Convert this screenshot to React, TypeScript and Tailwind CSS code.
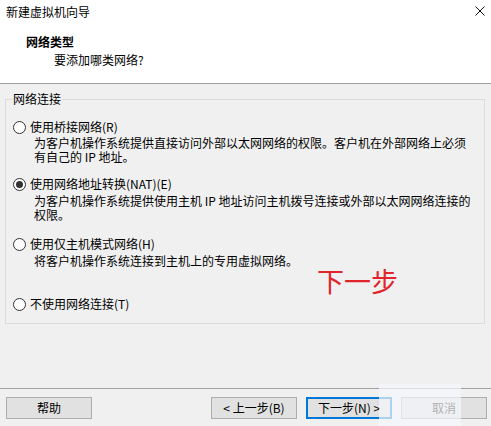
import React from "react";

function Radio({ checked }: { checked?: boolean }) {
  return (
    <span className="w-[13px] h-[13px] shrink-0 rounded-full border border-[#333333] bg-white flex items-center justify-center">
      {checked && <span className="w-[7px] h-[7px] rounded-full bg-[#333333]" />}
    </span>
  );
}

function Option({ label, checked, className }: { label: string; checked?: boolean; className?: string }) {
  return (
    <div className={"flex items-center gap-[4px] pl-[7px] h-[16px] " + (className ?? "")}>
      <Radio checked={checked} />
      <span className="leading-[16px] whitespace-nowrap">{label}</span>
    </div>
  );
}

function Btn({ children, primary }: { children: React.ReactNode; primary?: boolean }) {
  return (
    <div
      className={
        "w-[86px] h-[22px] flex items-center justify-center bg-[#e1e1e1] " +
        (primary ? "border-2 border-[#0078d7]" : "border border-[#adadad]")
      }
    >
      {children}
    </div>
  );
}

export default function App() {
  return (
    <div className="relative w-[491px] h-[426px] bg-[#f0f0f0] flex flex-col text-[12px] leading-[14px] text-[#000000] font-['Noto_Sans_CJK_SC','Microsoft_YaHei',sans-serif] overflow-hidden">
      <div className="bg-white h-[84px] border-b border-[#a0a0a0] flex flex-col shrink-0">
        <div className="h-[24px] flex items-center justify-between pl-[6px] pr-[6px]">
          <span className="leading-[16px]">新建虚拟机向导</span>
          <svg width="10" height="10" viewBox="0 0 10 10" className="mb-[2px]">
            <path d="M0.5 0.5 L9.5 9.5 M9.5 0.5 L0.5 9.5" stroke="#111" strokeWidth="1" fill="none" />
          </svg>
        </div>
        <div className="mt-[10px] pl-[26px] font-bold leading-[16px]">网络类型</div>
        <div className="mt-[3px] pl-[54px] leading-[14px]">要添加哪类网络?</div>
      </div>

      <div className="relative mt-[15px] ml-[5px] mr-[6px] border border-[#dcdcdc] pt-[19px] pb-[11px] shrink-0">
        <span className="absolute -top-[8px] left-[6px] px-[1px] bg-[#f0f0f0] leading-[14px]">网络连接</span>
        <Option label="使用桥接网络(R)" />
        <div className="mt-[1px] pl-[28px] leading-[14px] whitespace-nowrap">
          为客户机操作系统提供直接访问外部以太网网络的权限。客户机在外部网络上必须
          <br />
          有自己的 IP 地址。
        </div>
        <Option label="使用网络地址转换(NAT)(E)" checked className="mt-[12px]" />
        <div className="mt-[2px] pl-[28px] leading-[14px] whitespace-nowrap">
          为客户机操作系统提供使用主机 IP 地址访问主机拨号连接或外部以太网网络连接的
          <br />
          权限。
        </div>
        <Option label="使用仅主机模式网络(H)" className="mt-[14px]" />
        <div className="mt-[2px] pl-[28px] leading-[14px] whitespace-nowrap">
          将客户机操作系统连接到主机上的专用虚拟网络。
        </div>
        <Option label="不使用网络连接(T)" className="mt-[28px]" />
      </div>

      <div className="flex-1" />

      <div className="border-t border-[#a0a0a0] pt-[8px] pb-[7px] pl-[6px] pr-[4px] flex items-center shrink-0">
        <Btn>帮助</Btn>
        <div className="flex-1" />
        <div className="flex gap-[9px]">
          <Btn>&lt; 上一步(B)</Btn>
          <Btn primary>下一步(N) &gt;</Btn>
          <Btn>取消</Btn>
        </div>
      </div>

      <div className="absolute left-[317px] top-[266px] text-[27px] leading-[30px] text-[#e0262c] whitespace-nowrap">
        下一步
      </div>
      <div className="absolute left-[379px] top-[384px] w-[82px] h-[42px] bg-[#f3f7fc]/70" />
    </div>
  );
}
